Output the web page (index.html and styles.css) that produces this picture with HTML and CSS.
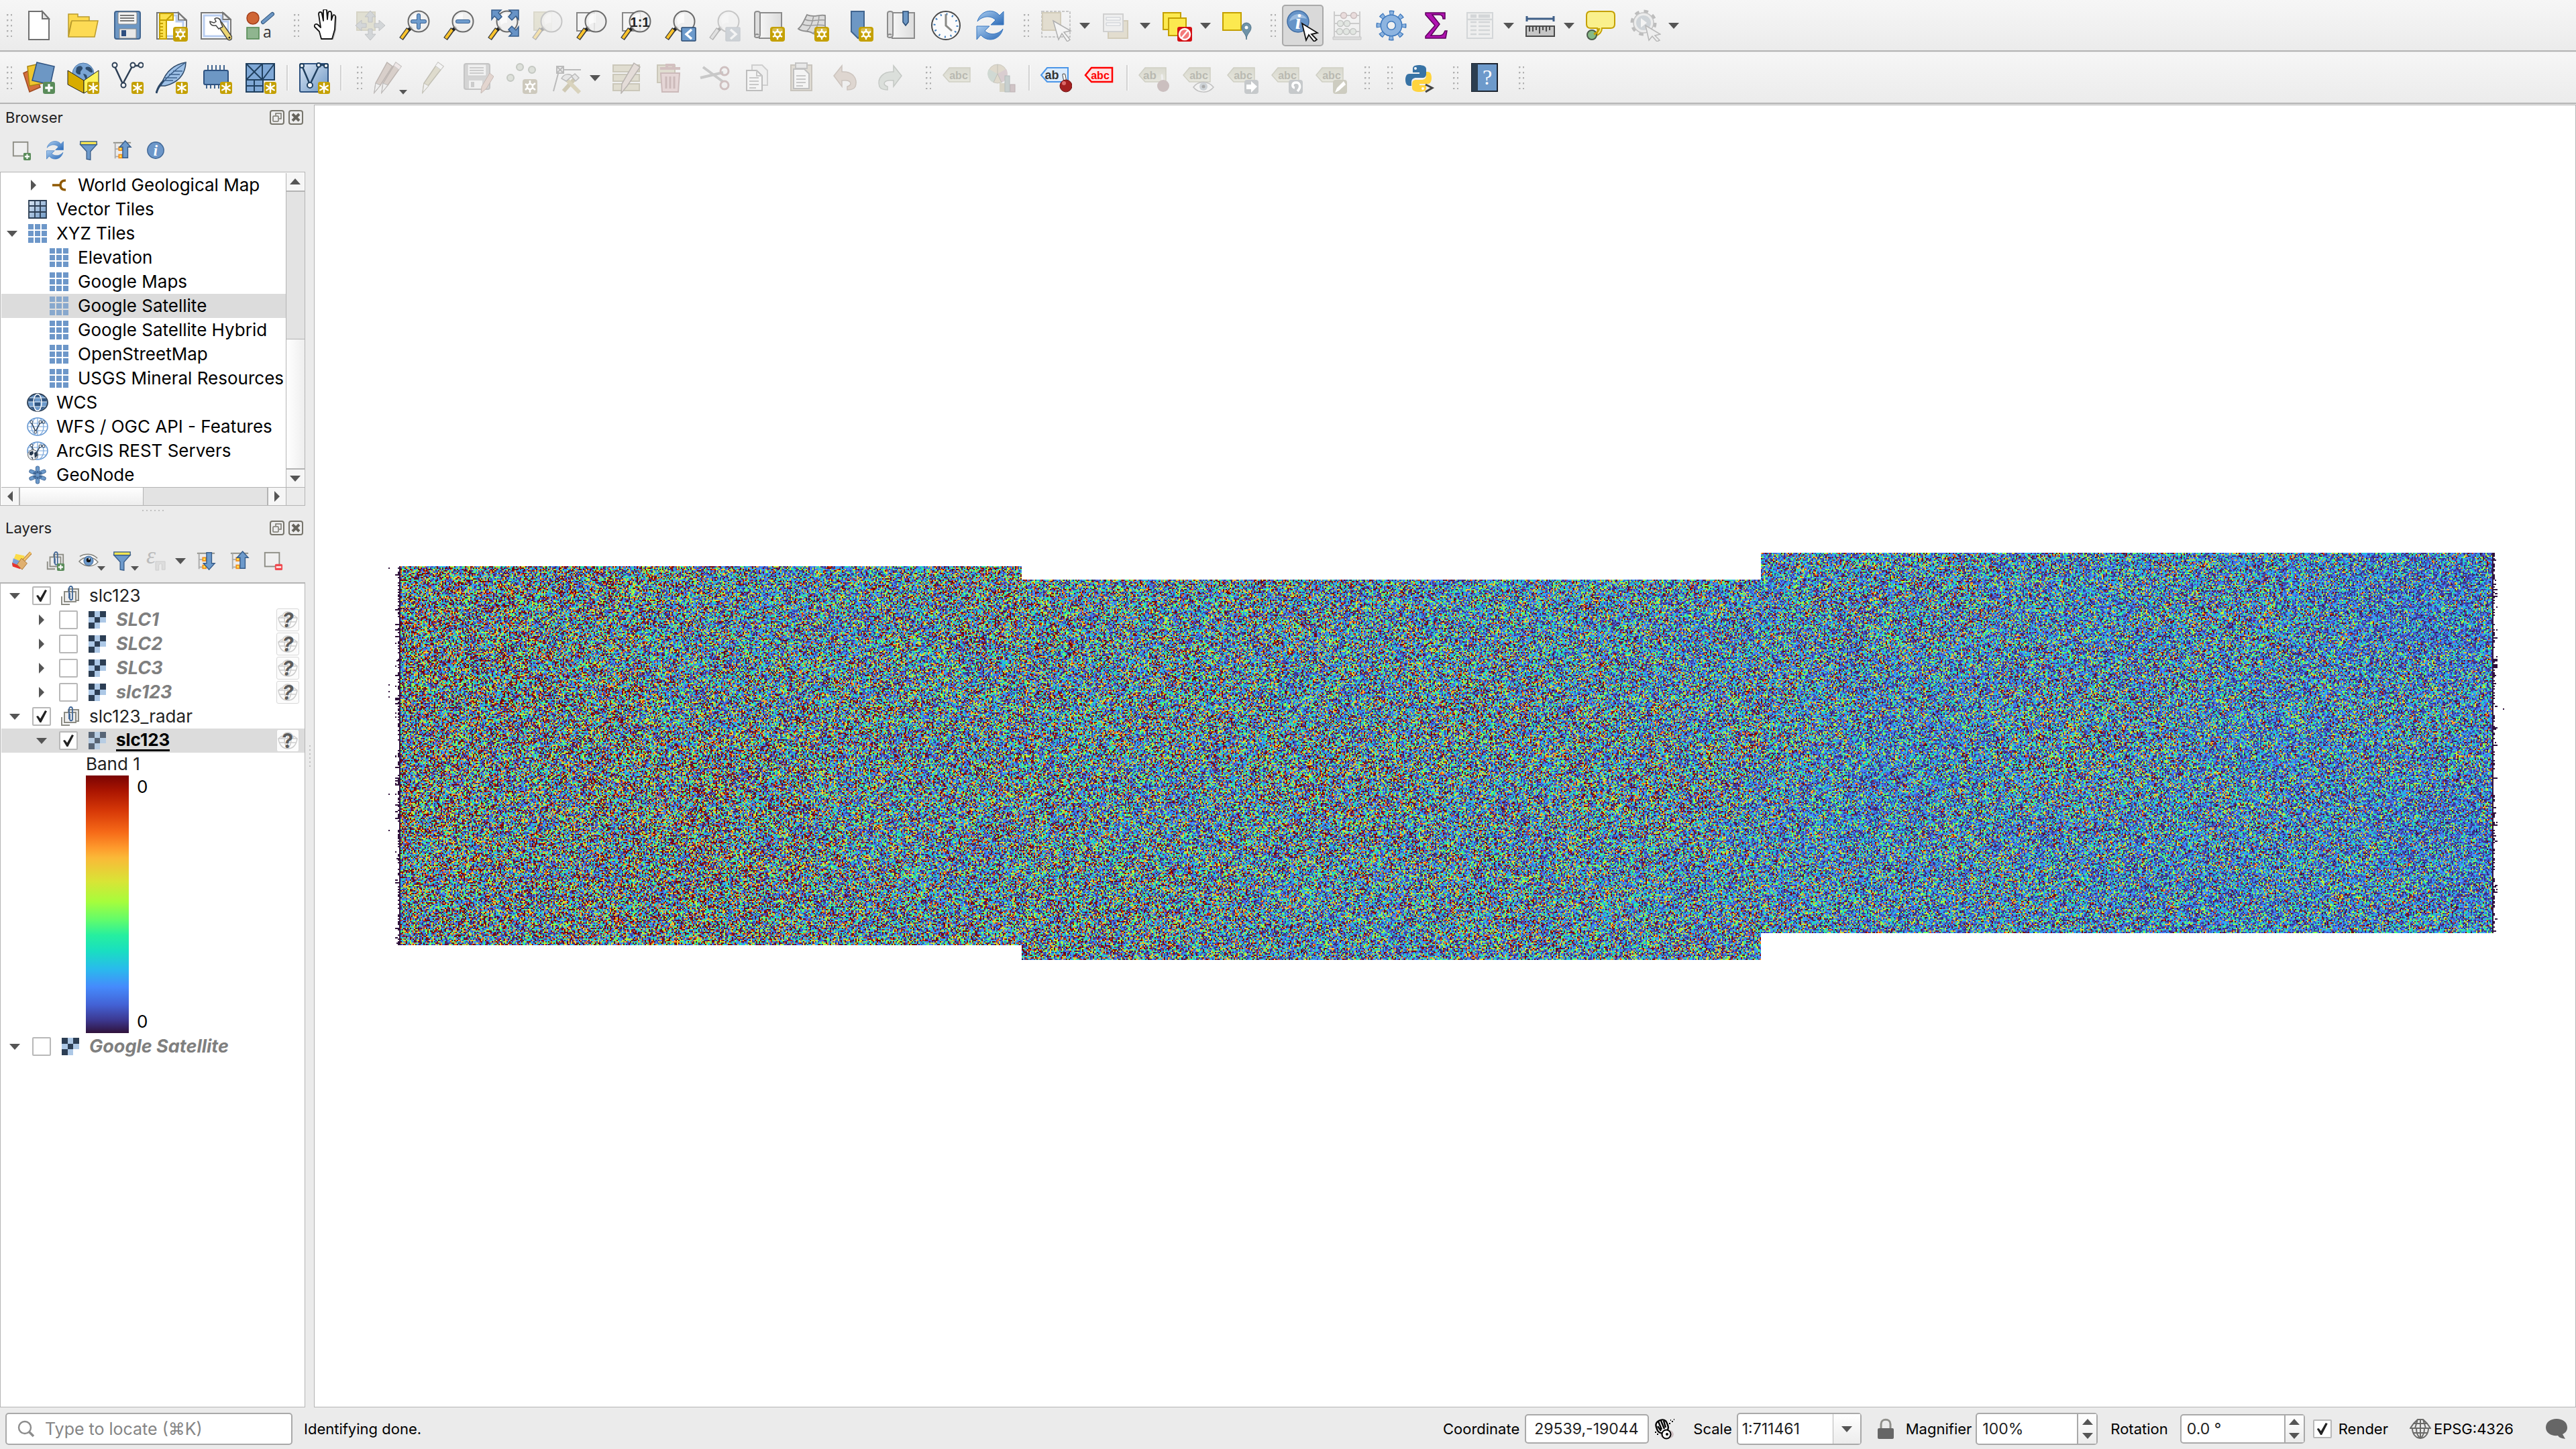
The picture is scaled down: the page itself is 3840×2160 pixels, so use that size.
FILE: index.html
```html
<!DOCTYPE html>
<html lang="en">
<head>
<meta charset="utf-8">
<title>QGIS</title>
<link rel="stylesheet" href="styles.css">
</head>
<body>
<svg class="defs" aria-hidden="true">
<defs>
<linearGradient id="g-blue" x1="0" y1="0" x2="1" y2="1"><stop offset="0" stop-color="#dbe7f5"/><stop offset="1" stop-color="#6d97c4"/></linearGradient>
<linearGradient id="g-arr" x1="0" y1="0" x2="1" y2="1"><stop offset="0" stop-color="#a9cbee"/><stop offset="1" stop-color="#2c6bb8"/></linearGradient>
<linearGradient id="g-page" x1="0" y1="0" x2="1" y2="0"><stop offset="0" stop-color="#f6f6f6"/><stop offset="1" stop-color="#dcdcdc"/></linearGradient>
<linearGradient id="g-tag" x1="0" y1="0" x2="0" y2="1"><stop offset="0" stop-color="#d9d9cf"/><stop offset="1" stop-color="#e6e6dd"/></linearGradient>
</defs>
<symbol id="badge" viewBox="0 0 22 22"><rect width="22" height="22" rx="4" fill="#c4a000"/><rect x="3" y="2" width="16" height="8" rx="3" fill="#d8bd4a"/><circle cx="11" cy="11" r="4" fill="none" stroke="#fff" stroke-width="2.4"/><path d="M11 3v4M11 15v4M4 7l3.500 2M14.500 13l3.500 2M4 15l3.500-2M14.500 9L18 7" stroke="#fff" stroke-width="2.400"/></symbol>
<symbol id="badge2" viewBox="0 0 22 22"><rect width="22" height="22" rx="4" fill="#c4a000"/><path d="M11 3v16M4 7l14 8M4 15l14-8" stroke="#fff" stroke-width="3" stroke-linecap="round"/></symbol>
<symbol id="plus" viewBox="0 0 22 22"><rect width="22" height="22" rx="4" fill="#5a8c5a"/><path d="M11 4v14M4 11h14" stroke="#fff" stroke-width="4"/></symbol>
<symbol id="lens" viewBox="0 0 48 48"><path d="M4 44L15 29" stroke="#3b3b3b" stroke-width="7"/><path d="M4.500 43L14 30" stroke="#fcc42c" stroke-width="4"/><path d="M15 31l5-5" stroke="#222" stroke-width="5"/><circle cx="30" cy="18" r="15.500" fill="#eee" fill-opacity=".85" stroke="#6b6b6b" stroke-width="2"/><path d="M19 16a11 11 0 0 1 11-10v14c-6 0-8 2-9 4z" fill="#fff" opacity=".7"/></symbol>
<symbol id="new" viewBox="0 0 48 48"><path d="M9 3h20l10 11v31H9z" fill="#fff" stroke="#707070" stroke-width="2"/><path d="M29 3v11h10z" fill="#e4e4e4" stroke="#707070" stroke-width="2"/></symbol>
<symbol id="open" viewBox="0 0 48 48"><path d="M2 7h14v4h17v8H6L2 40z" fill="#fcd94f" stroke="#b99a2c" stroke-width="1.500"/><path d="M7 17h39l-5 24H2z" fill="#fddb55" stroke="#b99a2c" stroke-width="1.500"/></symbol>
<symbol id="save" viewBox="0 0 48 48"><rect x="5" y="3" width="38" height="41" rx="3" fill="#6d97c4" stroke="#41658f" stroke-width="2"/><rect x="10" y="4" width="28" height="18" rx="2" fill="#f3f3f3" stroke="#888"/><path d="M13 9h21M13 13h21M13 17h21" stroke="#777" stroke-width="2"/><rect x="12" y="29" width="25" height="14" fill="#e8e8e8" stroke="#888"/><rect x="15" y="31" width="7" height="9" fill="#2e4f80"/></symbol>
<symbol id="layout" viewBox="0 0 48 48"><path d="M2 5h32l12 11v28H2z" fill="#fff" stroke="#777" stroke-width="2"/><path d="M34 5v11h11z" fill="#eee" stroke="#777" stroke-width="2"/><path d="M6 9h25v9h10v22H6z" fill="none" stroke="#b9cdf0" stroke-width="3"/><path d="M6 6h20v10H16v28H6z" fill="#fce14e" stroke="#c4a000" stroke-width="2"/><path d="M6 16h10L26 6M6 21h5M6 26h5M6 31h5M6 36h5M6 40h5" fill="none" stroke="#c4a000" stroke-width="2"/><use href="#badge" x="26" y="26" width="22" height="22"/></symbol>
<symbol id="layouts" viewBox="0 0 48 48"><path d="M2 5h33l11 10v29H2z" fill="#fff" stroke="#777" stroke-width="2"/><path d="M34 5v10h11z" fill="#eee" stroke="#777" stroke-width="2"/><path d="M6 9h26v9h10v22H6z" fill="none" stroke="#b9cdf0" stroke-width="3"/><path d="M30 22l14 20" stroke="#444" stroke-width="9" stroke-linecap="round"/><path d="M30 22l14 20" stroke="#ecd573" stroke-width="6" stroke-linecap="round"/><path d="M22 14c4-3 9 0 9 5l3 7-6 3-4-5c-5 1-9-1-9-6l6 2 3-2z" fill="#fafafa" stroke="#444" stroke-width="1.500"/><circle cx="44" cy="42" r="1.500" fill="#222"/></symbol>
<symbol id="style" viewBox="0 0 48 48"><ellipse cx="13" cy="13" rx="9" ry="9" fill="#cf6535" stroke="#a4401c" stroke-width="1.500"/><path d="M42 7L28 19" stroke="#32577f" stroke-width="6" stroke-linecap="round"/><path d="M42 7L28 19" stroke="#6d97c4" stroke-width="4" stroke-linecap="round"/><rect x="4" y="27" width="18" height="17" fill="#8fb58f" stroke="#4f864f" stroke-width="1.500"/><text x="28" y="42" font-size="23" font-family="Open Sans, sans-serif" fill="#333">a</text></symbol>
<symbol id="hand" viewBox="0 0 48 48"><path d="M18 44l-4-12-7-7c-1-3 2-4 4-3l4 4-2-20c0-4 5-4 5 0l2 11V3c0-4 5-4 5 0l1 13 1-10c1-3 4-3 4 1v10l2-7c1-3 4-2 4 1l-1 19-4 14z" transform="translate(3 1)" fill="#666" opacity=".45"/><path d="M17 44l-3-11-7-7c-1-4 2-5 5-3l4 4-3-20c0-4 5-4 5 0l2 10V2c0-3 5-3 5 0l1 13 1-10c1-3 5-3 5 1v10l2-6c1-3 4-2 4 1l-1 19-4 14z" fill="#fff" stroke="#111" stroke-width="1.800" stroke-linejoin="round"/></symbol>
<symbol id="pan" viewBox="0 0 48 48"><rect x="4" y="4" width="27" height="27" fill="#e0dfd2" stroke="#d6d4c6" stroke-width="2"/><path d="M24 2l8 9h-5v8h-6v-8h-5zM24 46l8-9h-5v-8h-6v8h-5zM2 24l9-8v5h7v6h-7v5zM46 24l-9-8v5h-7v6h7v5z" fill="#d3d6d8" stroke="#c0c2c4"/></symbol>
<symbol id="zin" viewBox="0 0 48 48"><use href="#lens"/><path d="M30 9v18M21 18h18" stroke="#3a6395" stroke-width="6" stroke-linecap="round"/><path d="M30 9v18M21 18h18" stroke="#6f9ccd" stroke-width="4" stroke-linecap="round"/></symbol>
<symbol id="zout" viewBox="0 0 48 48"><use href="#lens"/><path d="M22 18h16" stroke="#3a6395" stroke-width="6" stroke-linecap="round"/><path d="M22 18h16" stroke="#6f9ccd" stroke-width="4" stroke-linecap="round"/></symbol>
<symbol id="zfull" viewBox="0 0 48 48"><use href="#lens"/><g fill="#6793c6" stroke="#365c8a" stroke-width="1.500"><path d="M7 1h14l-4 4 5 6-5 5-6-6-4 5z"/><path d="M47 1H33l4 4-5 6 5 5 6-6 4 5z"/><path d="M47 40H33l4-4-5-6 5-5 6 6 4-5z"/></g></symbol>
<symbol id="zsel" viewBox="0 0 48 48"><rect x="4" y="4" width="26" height="27" fill="#c9c49a" stroke="#aaa57e" stroke-width="2"/><use href="#lens"/></symbol>
<symbol id="zlayer" viewBox="0 0 48 48"><rect x="2" y="5" width="26" height="27" fill="#f4f4f4" stroke="#888" stroke-width="2"/><use href="#lens"/></symbol>
<symbol id="znative" viewBox="0 0 48 48"><rect x="4" y="5" width="26" height="27" fill="#f4f4f4" stroke="#888" stroke-width="2"/><use href="#lens"/><text x="30" y="26" text-anchor="middle" font-size="20" font-weight="700" font-family="Liberation Sans, sans-serif" fill="#222">1:1</text></symbol>
<symbol id="zlast" viewBox="0 0 48 48"><use href="#lens"/><rect x="26" y="27" width="21" height="20" rx="1" fill="#6d9acb" stroke="#284a72" stroke-width="1.500"/><path d="M41 30l-8 7 8 7" fill="none" stroke="#fff" stroke-width="3.500"/></symbol>
<symbol id="znext" viewBox="0 0 48 48"><g filter="grayscale(1)"><use href="#lens"/></g><rect x="26" y="27" width="21" height="20" rx="1" fill="#8a98a6" stroke="#7c8896" stroke-width="1.500"/><path d="M33 30l8 7-8 7" fill="none" stroke="#fff" stroke-width="3.500"/></symbol>
<symbol id="scroll" viewBox="0 0 48 48"><path d="M10 5h33v38H10z" fill="url(#g-page)" stroke="#8c8c8c" stroke-width="2"/><path d="M3 38V6c0-4 8-4 8 0v32c0 5-8 5-8 2s4-4 6-2" fill="#dedede" stroke="#8c8c8c" stroke-width="2"/></symbol>
<symbol id="newmap" viewBox="0 0 48 48"><use href="#scroll"/><use href="#badge" x="26" y="26" width="22" height="22"/></symbol>
<symbol id="map3d" viewBox="0 0 48 48"><path d="M15 8c10 5 18-1 27 1 1 9-2 14 2 23-10 2-12 8-20 4-8-6-14-1-22-7 7-6 9-14 13-21z" fill="#dcdcdc" stroke="#8c8c8c" stroke-width="1.800"/><path d="M12 15c10 5 18-1 30 1M8 22c10 5 20-1 34 2M25 9c-2 10-4 18-11 24M33 9c0 8-3 20-9 27" fill="none" stroke="#999" stroke-width="1.500"/><use href="#badge" x="26" y="26" width="22" height="22"/></symbol>
<symbol id="newbm" viewBox="0 0 48 48"><path d="M15 3h19v30l-9 10-10-10z" fill="#6d97c4" stroke="#41658f" stroke-width="2"/><use href="#badge" x="26" y="26" width="22" height="22"/></symbol>
<symbol id="bms" viewBox="0 0 48 48"><use href="#scroll"/><path d="M26 3h8v16l-4 5-4-5z" fill="#6d97c4" stroke="#284a72" stroke-width="1.500"/></symbol>
<symbol id="clock" viewBox="0 0 48 48"><circle cx="24" cy="24" r="21" fill="#fbfbfb" stroke="#4a4a4a" stroke-width="2"/><circle cx="24" cy="24" r="17" fill="none" stroke="#3f7fc0" stroke-width="3" stroke-dasharray="2 6.900"/><path d="M24 7v17l9 8" fill="none" stroke="#8a8a86" stroke-width="3"/></symbol>
<symbol id="refresh" viewBox="0 0 48 48"><path d="M5 18C9 2 28-3 38 9l6-6v20H25l7-7C25 8 12 10 5 18z" fill="url(#g-arr)" stroke="#3a78c0"/><path d="M43 29C39 46 20 50 10 38l-6 7V25h19l-7 7c7 7 20 6 27-3z" fill="url(#g-arr)" stroke="#3a78c0"/></symbol>
<symbol id="select" viewBox="0 0 48 48"><rect x="3" y="3" width="42" height="38" fill="none" stroke="#c8c8c8" stroke-width="2" stroke-dasharray="4 2"/><rect x="4" y="5" width="27" height="26" fill="#e2ddcf" stroke="#d2ccba" stroke-width="2"/><path d="M20 17l26 15-10 2 9 11-4 3-8-12-5 9z" fill="#f4f4f4" stroke="#b0b0b0" stroke-width="1.500"/></symbol>
<symbol id="selform" viewBox="0 0 48 48"><rect x="12" y="17" width="29" height="26" fill="#e2ddcf" stroke="#d2ccba" stroke-width="2"/><rect x="5" y="7" width="29" height="26" fill="#eee" stroke="#d0d0d0" stroke-width="2"/><path d="M9 12h21v4H9zM9 20h21v4H9z" fill="#f6f6f6" stroke="#c8ccd2"/></symbol>
<symbol id="desel" viewBox="0 0 48 48"><rect x="4" y="5" width="26" height="25" fill="#fce94f" stroke="#c4a000" stroke-width="2"/><rect x="12" y="13" width="26" height="26" fill="#fce94f" stroke="#c4a000" stroke-width="2"/><rect x="25" y="26" width="22" height="22" rx="3" fill="#d40f14"/><circle cx="36" cy="37" r="8" fill="#f37a7a" stroke="#fff" stroke-width="2.500"/><path d="M41 31L31 43" stroke="#fff" stroke-width="2.500"/></symbol>
<symbol id="selloc" viewBox="0 0 48 48"><rect x="3" y="5" width="27" height="26" fill="#fce94f" stroke="#c4a000" stroke-width="2"/><path d="M38 45c0-9-7-11-7-18a7 7 0 0 1 14 0c0 7-7 9-7 18z" fill="#6f93a8" stroke="#50738a"/><circle cx="38" cy="27" r="2.500" fill="#fff"/></symbol>
<symbol id="identify" viewBox="0 0 48 48"><circle cx="17" cy="18" r="16" fill="#6694c8" stroke="#3f6ca3" stroke-width="1.500"/><path d="M4 18A14 14 0 0 1 30 14C22 12 12 13 4 18z" fill="#9dbde0"/><text x="17" y="29" text-anchor="middle" font-size="31" font-weight="700" font-style="italic" font-family="Liberation Serif, serif" fill="#fff">i</text><path d="M23 21l23 14-9 2 8 8-4 3-8-10-4 8z" fill="#fff" stroke="#111" stroke-width="1.800"/></symbol>
<symbol id="abacus" viewBox="0 0 48 48"><path d="M5 3v38M43 3v38M5 9h38M5 21h38M5 33h38" stroke="#ccc" stroke-width="2" fill="none"/><path d="M3 41h42v4H3z" fill="#ddd" stroke="#c6c6c6"/><g fill="#e9dcdc" stroke="#c9bcbc" stroke-width="1.500"><circle cx="19" cy="9" r="4.500"/><circle cx="34" cy="9" r="4.500"/></g><g fill="#e2e6e2" stroke="#c4c6c4" stroke-width="1.500"><circle cx="14" cy="21" r="4.500"/><circle cx="24" cy="21" r="4.500"/><circle cx="13" cy="33" r="4.500"/><circle cx="23" cy="33" r="4.500"/><circle cx="33" cy="33" r="4.500"/></g></symbol>
<symbol id="gear" viewBox="0 0 48 48"><circle cx="24" cy="24" r="18" fill="none" stroke="#3f79bd" stroke-width="9" stroke-dasharray="6.500 7.630" stroke-dashoffset="3.250"/><circle cx="24" cy="24" r="18" fill="none" stroke="#8db4e0" stroke-width="6" stroke-dasharray="4.500 9.630" stroke-dashoffset="2.250"/><circle cx="24" cy="24" r="11" fill="none" stroke="#3f79bd" stroke-width="11"/><circle cx="24" cy="24" r="11" fill="none" stroke="#8db4e0" stroke-width="8"/></symbol>
<symbol id="sigma" viewBox="0 0 48 48"><path d="M9 5h29v9h-3c0-4-2-6-6-6H19l11 14-13 17h13c5 0 6-3 8-7h3l-2 11H9v-3l14-16L9 8z" fill="#b012b0" stroke="#5c005c" stroke-width="1.500"/></symbol>
<symbol id="table" viewBox="0 0 48 48"><rect x="5" y="5" width="38" height="38" fill="#efefef" stroke="#d3d6d8" stroke-width="2"/><path d="M10 10h9M22 10h17" stroke="#d3d6d8" stroke-width="5"/><path d="M6 15h36M10 19h9M22 19h17M10 25h9M22 25h17M10 31h9M22 31h17M10 37h9M22 37h17" stroke="#d3d6d8" stroke-width="2.500"/></symbol>
<symbol id="ruler" viewBox="0 0 48 48"><path d="M4 14h40M4 10v8M44 10v8" stroke="#3f5f88" stroke-width="3" fill="none"/><rect x="3" y="25" width="42" height="15" fill="#c6c6c6" stroke="#4a4a4a" stroke-width="2"/><path d="M8 26v7M13 26v7M18 26v5M23 26v10M28 26v5M33 26v7M38 26v5" stroke="#4a4a4a" stroke-width="2"/></symbol>
<symbol id="maptip" viewBox="0 0 48 48"><path d="M9 3h30c4 0 6 2 6 6v13c0 4-2 6-6 6H26c0 6-4 10-11 12 5-4 5-7 4-12H9c-4 0-6-2-6-6V9c0-4 2-6 6-6z" fill="#faf08c" stroke="#c4a000" stroke-width="2"/><circle cx="11" cy="38" r="7" fill="#86b986" stroke="#4a5a4a" stroke-width="2"/><path d="M14 37c5-2 7-5 8-9" stroke="#c4a000" stroke-width="3" fill="none"/></symbol>
<symbol id="action" viewBox="0 0 48 48"><circle cx="22" cy="20" r="16" fill="none" stroke="#bdbdbd" stroke-width="7" stroke-dasharray="6 6.560"/><circle cx="22" cy="20" r="15" fill="#ececec" stroke="#c4c4c4" stroke-width="1.500"/><circle cx="22" cy="20" r="11" fill="#cfd4d8"/><path d="M18 13l9 7-9 7z" fill="#f3f3f3"/><path d="M25 24l22 13-8 2 7 7-4 2-7-8-5 6z" fill="#eee" stroke="#b8b8b8" stroke-width="1.500"/></symbol>

<symbol id="dsm" viewBox="0 0 48 48"><path d="M1 17l15-7 10 28-16 7z" fill="#d4703e" stroke="#9f4a20" stroke-width="1.500"/><path d="M7 7l18-4 6 29-21 4z" fill="#f0c62e" stroke="#a88512" stroke-width="1.500"/><path d="M21 1l26 6-6 27-27-6z" fill="#6d97c4" stroke="#2e5280" stroke-width="1.500"/><use href="#plus" x="30" y="30" width="18" height="18"/></symbol>
<symbol id="gpkg" viewBox="0 0 48 48"><circle cx="24" cy="18" r="16" fill="#7aa5d4" stroke="#4a76a8"/><path d="M14 9c4-4 8-3 9 0s-4 4-3 8-6 2-7-2zM28 8c6-2 9 2 10 6s-4 2-6 0-6-2-4-6zM24 18c5 0 8 4 4 9z" fill="#2e4c6e"/><path d="M1 13l24 15v19L1 34z" fill="#d8ac00" stroke="#222"/><path d="M47 13L25 28v19l22-13z" fill="#fcf35a" stroke="#222"/><use href="#badge2" x="30" y="30" width="18" height="18"/></symbol>
<symbol id="shp" viewBox="0 0 48 48"><path d="M5 7l12 26L31 7M33 6h8" fill="none" stroke="#2c3e54" stroke-width="2.500"/><g fill="#fff" stroke="#2c3e54" stroke-width="2"><circle cx="5" cy="5" r="3.500"/><circle cx="18" cy="35" r="3.500"/><circle cx="32" cy="5" r="3.500"/><circle cx="44" cy="5" r="3.500"/></g><use href="#badge2" x="30" y="30" width="18" height="18"/></symbol>
<symbol id="feather" viewBox="0 0 48 48"><path d="M45 1C28 4 14 14 8 36l6 0C30 32 44 22 45 1z" fill="#9dc0e6" stroke="#2c4766" stroke-width="1.500"/><path d="M1 46C8 32 20 18 45 1M12 28h14M14 24h18M20 19h16M26 14h14" fill="none" stroke="#3b5f8a" stroke-width="1.500"/><path d="M1 47C3 38 8 32 12 28" fill="none" stroke="#2c4766" stroke-width="3"/><use href="#badge2" x="30" y="30" width="18" height="18"/></symbol>
<symbol id="chip" viewBox="0 0 48 48"><path d="M12 5v8M18 5v8M24 5v8M30 5v8M36 5v8M10 34v6M16 34v6M22 34v6M28 34v6" stroke="#41658f" stroke-width="2"/><rect x="6" y="13" width="36" height="21" rx="2" fill="#6d97c4" stroke="#2e5280" stroke-width="2"/><use href="#badge2" x="30" y="30" width="18" height="18"/></symbol>
<symbol id="mesh" viewBox="0 0 48 48"><path d="M3 3h42v24H28v18H3z" fill="#7fa8d6"/><path d="M3 3h42v24H3zM27 3v24M3 3l24 24M27 3L3 27M45 3L27 27M3 27v18h25V27M15 27v18M3 36h25" fill="none" stroke="#20405f" stroke-width="2"/><use href="#badge2" x="30" y="30" width="18" height="18"/></symbol>
<symbol id="virt" viewBox="0 0 48 48"><rect x="3" y="3" width="42" height="42" rx="2" fill="url(#g-blue)" stroke="#2e5280" stroke-width="2"/><path d="M7 8l11 26L31 7M33 5h10" fill="none" stroke="#20405f" stroke-width="2.500"/><g fill="#fff" stroke="#20405f" stroke-width="2"><circle cx="6" cy="6" r="3"/><circle cx="18" cy="35" r="4"/><circle cx="31" cy="5" r="3"/><circle cx="42" cy="6" r="3"/></g><use href="#badge2" x="30" y="30" width="18" height="18"/></symbol>
<symbol id="pencil1" viewBox="0 0 48 48"><path d="M31 1l8 6-22 28-9 11 2-14z" fill="#dedbcd" stroke="#c2c0b5" stroke-width="1.500"/><path d="M10 32l7 4-9 10z" fill="#f0f0f0" stroke="#c2c0b5"/><path d="M31 1l8 6-4 5-8-6z" fill="#f4f4f4" stroke="#ccc"/></symbol>
<symbol id="pencils" viewBox="0 0 48 48"><g fill="#d8cfca" stroke="#bdb5b1" stroke-width="1.500"><path d="M21 1l8 6-18 28-9 11 2-14z"/><path d="M34 1l8 6-20 28-9 11 2-14z"/></g><path d="M4 32l7 3-9 11zM15 32l7 3-9 11z" fill="#eee" stroke="#bbb"/><path d="M34 1l8 6-3 5-8-6z" fill="#f0e8e8" stroke="#ccc"/></symbol>
<symbol id="saveedit" viewBox="0 0 48 48"><rect x="4" y="3" width="38" height="38" rx="3" fill="#d4d4d4" stroke="#c4c4c4" stroke-width="2"/><rect x="9" y="4" width="28" height="17" fill="#f0f0f0" stroke="#ccc"/><path d="M12 9h21M12 13h21M12 17h21" stroke="#ccc" stroke-width="2"/><rect x="11" y="28" width="20" height="12" fill="#f0f0f0"/><rect x="14" y="30" width="5" height="8" fill="#ccc"/><path d="M42 17l6 5-11 18-8 7 1-10z" fill="#e3d5cf" stroke="#c6b9b4"/></symbol>
<symbol id="addpt" viewBox="0 0 48 48"><g fill="#dde0da" stroke="#c4c8c2" stroke-width="2"><circle cx="21" cy="8" r="5"/><circle cx="39" cy="12" r="5"/><circle cx="7" cy="24" r="5"/></g><rect x="25" y="26" width="22" height="22" rx="4" fill="#cdc9bd"/><circle cx="36" cy="37" r="4" fill="none" stroke="#fff" stroke-width="2.500"/><path d="M36 28v5M36 41v5M29 33l3 2M40 39l4 3M29 42l3-3M40 35l4-3" stroke="#fff" stroke-width="2.500"/></symbol>
<symbol id="vertex" viewBox="0 0 48 48"><rect x="10" y="7" width="10" height="10" fill="#eee" stroke="#bbb" stroke-width="2"/><path d="M11 8l8 8M19 8l-8 8M20 12h26M12 18L5 44" stroke="#bbb" stroke-width="2"/><path d="M20 44l18-20" stroke="#cfc9b4" stroke-width="6"/><path d="M24 26l20 20" stroke="#d9d3bd" stroke-width="6"/><path d="M17 25c4-8 12-7 16-4l-9 8zM32 22l5-4 6 6-5 5z" fill="#e6e6e6" stroke="#bbb" stroke-width="1.500"/></symbol>
<symbol id="attr" viewBox="0 0 48 48"><g fill="#e0ddd0" stroke="#cbc8ba" stroke-width="2"><rect x="4" y="5" width="39" height="10"/><rect x="4" y="19" width="39" height="10"/><rect x="4" y="33" width="39" height="10"/></g><path d="M35 2l9 6-19 28-9 11 1-14z" fill="#e4dcd8" stroke="#b9b4b0" stroke-width="1.500"/></symbol>
<symbol id="trash" viewBox="0 0 48 48"><rect x="4" y="5" width="26" height="26" fill="#e0ddd0" stroke="#cbc8ba" stroke-width="2"/><path d="M8 10h30M18 9V5h10v4" stroke="#d3c0c0" stroke-width="4" fill="none"/><path d="M9 17h28l-2 28H11z" fill="#e5d6d6" stroke="#ccbaba" stroke-width="2"/><path d="M17 22v18M23 22v18M29 22v18" stroke="#ccbaba" stroke-width="3"/></symbol>
<symbol id="cut" viewBox="0 0 48 48"><path d="M6 8l30 22M2 24l34-8" stroke="#c8c8c8" stroke-width="4"/><circle cx="38" cy="14" r="6" fill="none" stroke="#cfc0c0" stroke-width="3"/><circle cx="38" cy="35" r="6" fill="none" stroke="#cfc0c0" stroke-width="3"/></symbol>
<symbol id="copy" viewBox="0 0 48 48"><path d="M13 5h15l8 8v22H13z" fill="#efefef" stroke="#cfcfcf" stroke-width="2"/><path d="M5 13h15l8 8v22H5z" fill="#f4f4f4" stroke="#bdbdbd" stroke-width="2"/><path d="M20 13v8h8M9 24h14M9 29h14M9 34h14M9 39h10" stroke="#c8c8c8" stroke-width="2" fill="none"/></symbol>
<symbol id="paste" viewBox="0 0 48 48"><rect x="5" y="5" width="31" height="38" fill="#e0dcd4" stroke="#c9c5be" stroke-width="2"/><rect x="12" y="2" width="17" height="8" fill="#e8e8e8" stroke="#c4c4c4" stroke-width="2"/><path d="M9 11h16l7 7v22H9z" fill="#f4f4f4" stroke="#c0c0c0" stroke-width="2"/><path d="M13 21h14M13 26h14M13 31h14M13 36h10" stroke="#c8c8c8" stroke-width="2"/></symbol>
<symbol id="undo" viewBox="0 0 48 48"><path d="M3 21L15 6v9c16-1 24 10 20 22-2 4-6 5-12 5v-5c8-2 7-11-8-9v9z" fill="#ded6d0" stroke="#ccc4be" stroke-width="1.500"/></symbol>
<symbol id="redo" viewBox="0 0 48 48"><path d="M38 21L26 6v9C10 14 1 25 5 37c2 4 6 5 12 5v-5c-8-2-7-11 9-9v9z" fill="#dbdfdb" stroke="#c5c9c5" stroke-width="1.500"/></symbol>
<symbol id="tag" viewBox="0 0 48 48"><path d="M2 20L11 9h31v21H11z" fill="url(#g-tag)" stroke="#cfcfc4" stroke-width="1.500"/><text x="25" y="26" text-anchor="middle" font-size="16" font-weight="700" font-family="Liberation Sans, sans-serif" fill="#b9b9b1">abc</text></symbol>
<symbol id="diagram" viewBox="0 0 48 48"><circle cx="17" cy="18" r="14" fill="#dfd9cc" stroke="#cbc9c0"/><path d="M17 18L4 11a14 14 0 0 0 7 20z" fill="#d0d9d3"/><path d="M17 18L30 11a14 14 0 0 1-7 20z" fill="#d9cdd0"/><path d="M17 4v14l-6 13M17 18l6 13" stroke="#c0c0b8" fill="none"/><rect x="20" y="32" width="9" height="13" fill="#d8d4c6"/><rect x="28" y="21" width="7" height="24" fill="#c8d0cf" stroke="#b4bcbb"/><rect x="36" y="34" width="7" height="11" fill="#d0c4c6" stroke="#bcb0b2"/></symbol>
<symbol id="pinlab" viewBox="0 0 48 48"><path d="M2 20L11 9h31v21H11z" fill="#dcebfb" stroke="#4b96e8" stroke-width="2"/><text x="18" y="26" text-anchor="middle" font-size="18" font-weight="700" font-family="Liberation Sans, sans-serif" fill="#333">ab</text><path d="M36 20l2 10" stroke="#444" stroke-width="5" stroke-linecap="round"/><path d="M36 20l2 10" stroke="#fff" stroke-width="3" stroke-linecap="round"/><circle cx="39" cy="36" r="9" fill="#a32020" stroke="#6f1010"/><circle cx="36" cy="32" r="3" fill="#dd6a6a"/></symbol>
<symbol id="redlab" viewBox="0 0 48 48"><path d="M2 20L11 9h31v21H11z" fill="#fde3e3" stroke="#f00" stroke-width="2.500"/><text x="24" y="26" text-anchor="middle" font-size="16" font-weight="700" font-family="Liberation Sans, sans-serif" fill="#f00">abc</text></symbol>
<symbol id="tagpin" viewBox="0 0 48 48"><path d="M2 20L11 9h31v21H11z" fill="url(#g-tag)" stroke="#cfcfc4" stroke-width="1.500"/><text x="18" y="26" text-anchor="middle" font-size="17" font-weight="700" font-family="Liberation Sans, sans-serif" fill="#b9b9b1">ab</text><path d="M36 20l1 9" stroke="#eee" stroke-width="3" stroke-linecap="round"/><circle cx="38" cy="36" r="9" fill="#cbbfbf"/></symbol>
<symbol id="tageye" viewBox="0 0 48 48"><use href="#tag"/><path d="M17 38c7-10 22-10 30 0-8 10-23 9-30 0z" fill="#f2f2f2" stroke="#c0c0c0" stroke-width="1.500"/><circle cx="32" cy="37" r="6" fill="#cdd2d6"/><circle cx="32" cy="37" r="2.500" fill="#aaa"/></symbol>
<symbol id="tagmove" viewBox="0 0 48 48"><use href="#tag"/><rect x="27" y="27" width="21" height="21" rx="4" fill="#c6c9cb"/><path d="M30 34h7v-5l9 8-9 9v-5h-7z" fill="#fff"/></symbol>
<symbol id="tagrot" viewBox="0 0 48 48"><use href="#tag"/><rect x="27" y="27" width="21" height="21" rx="4" fill="#c6c9cb"/><path d="M40 44c6-6 4-13-2-13s-7 7-2 8" fill="none" stroke="#fff" stroke-width="3.500"/></symbol>
<symbol id="tagedit" viewBox="0 0 48 48"><use href="#tag"/><rect x="27" y="27" width="21" height="21" rx="4" fill="#cdccc0"/><path d="M43 29l3 5-10 9-6 3 3-7z" fill="#fff"/></symbol>
<symbol id="python" viewBox="0 0 48 48"><path d="M23 5c-9 0-9 4-9 6v5h10v2H9c-5 0-6 5-6 9 0 5 2 9 6 9h3v-5c0-5 3-7 7-7h9c4 0 6-2 6-6v-7c0-4-4-6-11-6z" fill="#3873a5"/><path d="M25 45c9 0 9-4 9-6v-4H24v-2h12c5 0 6-5 6-9s-1-9-6-9h-2v5c0 5-3 7-7 7h-8c-4 0-6 2-6 6v6c0 4 4 6 12 6z" fill="#ffd43e"/><circle cx="18" cy="10" r="2" fill="#fff"/><circle cx="29" cy="40" r="2" fill="#fff"/><path d="M33 34l10 5-10 6" fill="none" stroke="#444" stroke-width="3"/></symbol>
<symbol id="help" viewBox="0 0 48 48"><rect x="4" y="3" width="38" height="41" fill="#6d9acb" stroke="#1c2430" stroke-width="2"/><path d="M4 3h9v41H4z" fill="#2c3e50"/><text x="27" y="34" text-anchor="middle" font-size="32" font-family="Liberation Serif, serif" fill="#fff">?</text></symbol>

<symbol id="s-add" viewBox="0 0 32 32"><rect x="3" y="3" width="23" height="22" fill="#efefef" stroke="#8c8c84" stroke-width="2"/><use href="#plus" x="19" y="20" width="12" height="12"/></symbol>
<symbol id="s-filter" viewBox="0 0 32 32"><path d="M3 7l10 11v12l6 1V18L29 7z" fill="#6d9acb" stroke="#3a5f8c" stroke-width="1.500"/><rect x="3" y="2" width="26" height="5" fill="#fce94f" stroke="#3a5f8c" stroke-width="1.500"/></symbol>
<symbol id="s-tree" viewBox="0 0 32 32"><path d="M2 4h28" stroke="#8c8c84" stroke-width="2"/><path d="M5 4v25M5 14h6M5 26h6" stroke="#aaa" stroke-width="2" fill="none"/><rect x="11" y="11" width="5" height="5" fill="#fce94f" stroke="#f39020" stroke-width="2"/><rect x="11" y="23" width="5" height="5" fill="#fce94f" stroke="#f39020" stroke-width="2"/></symbol>
<symbol id="s-up" viewBox="0 0 32 32"><use href="#s-tree"/><path d="M21 1l9 10h-5v17h-8V11h-5z" fill="#6d9acb" stroke="#365c8a" stroke-width="1.500"/></symbol>
<symbol id="s-down" viewBox="0 0 32 32"><use href="#s-tree"/><path d="M21 30l9-10h-5V3h-8v17h-5z" fill="#6d9acb" stroke="#365c8a" stroke-width="1.500"/></symbol>
<symbol id="s-info" viewBox="0 0 32 32"><circle cx="16" cy="16" r="13" fill="#6d97c9" stroke="#3d6595" stroke-width="1.500"/><text x="16" y="24" text-anchor="middle" font-size="24" font-weight="700" font-style="italic" font-family="Liberation Serif, serif" fill="#fff">i</text></symbol>
<symbol id="s-brush" viewBox="0 0 32 32"><path d="M7 5l14 3-6 18-14-6z" fill="#fbdc4a"/><path d="M3 12l15 6-3 9-14-4z" fill="#7ba0da"/><path d="M1 19l15 6-2 4-12-4z" fill="#e8322c"/><path d="M31 3L18 17" stroke="#b9803a" stroke-width="5"/><path d="M31 3L18 17" stroke="#f2c36b" stroke-width="3"/><path d="M16 12l9 8-8 10-8-8z" fill="#e0b070" stroke="#a87434"/></symbol>
<symbol id="group" viewBox="0 0 32 32"><path d="M4 17v12h12" fill="none" stroke="#8c8c84" stroke-width="2"/><rect x="14" y="6" width="15" height="17" fill="#eee" stroke="#8c8c84" stroke-width="2"/><rect x="8" y="10" width="17" height="15" fill="#eee" stroke="#8c8c84" stroke-width="2"/><path d="M15 20V5c0-4 5-4 5 0v15c0 3-4 3-4 0v-8" fill="none" stroke="#3f6595" stroke-width="1.800"/></symbol>
<symbol id="s-group" viewBox="0 0 32 32"><use href="#group"/><use href="#plus" x="19" y="20" width="12" height="12"/></symbol>
<symbol id="s-eye" viewBox="0 0 32 32"><path d="M2 9c8-5 20-5 28 3M1 17c8-9 22-9 30 1-8 9-21 8-30-1z" fill="#fbfbfb" stroke="#80807a" stroke-width="1.500"/><circle cx="16" cy="16" r="7.500" fill="#6d9acb" stroke="#3a5f8c"/><circle cx="16" cy="15" r="3.500" fill="#111"/><circle cx="17" cy="13" r="1.200" fill="#fff"/></symbol>
<symbol id="s-expr" viewBox="0 0 32 32"><text x="1" y="20" font-size="38" font-family="Liberation Serif, serif" font-style="italic" fill="#bcbcbc">ε</text><path d="M16 17h15v13h-5v-8l-2-2-3 3v8h-5z" fill="#ddd" stroke="#ccc"/></symbol>
<symbol id="s-rem" viewBox="0 0 32 32"><rect x="3" y="3" width="23" height="22" fill="#efefef" stroke="#8c8c84" stroke-width="2"/><rect x="19" y="21" width="12" height="10" rx="2" fill="#ef4b51"/><path d="M21 26h8" stroke="#fff" stroke-width="2.500"/></symbol>
<symbol id="raster" viewBox="0 0 26 26"><path d="M0 0h9v9H0zM17 0h9v9h-9zM9 9h8v8H9zM0 17h9v9H0z" fill="#2c3e54"/><path d="M9 0h8v9H9zM0 9h9v8H0zM17 9h9v8h-9zM9 17h8v9H9z" fill="#adc8e6"/></symbol>
<symbol id="xyz" viewBox="0 0 28 28"><path d="M0 0h8v8H0zM10 0h8v8h-8zM20 0h8v8h-8zM0 10h8v8H0zM10 10h8v8h-8zM20 10h8v8h-8zM0 20h8v8H0zM10 20h8v8h-8zM20 20h8v8h-8z" fill="#6d97c9"/></symbol>
<symbol id="vt" viewBox="0 0 28 28"><rect x="1" y="1" width="26" height="26" fill="url(#g-blue)"/><path d="M1 1h26v26H1zM10 1v26M18 1v26M1 9h26M1 18h26" fill="none" stroke="#2c3e54" stroke-width="1.800"/></symbol>
<symbol id="conn" viewBox="0 0 28 28"><path d="M4 14h11" stroke="#8f5902" stroke-width="3.500"/><path d="M24 7c-5 0-8 2-8 7s3 7 8 7" fill="none" stroke="#8f5902" stroke-width="3.500"/></symbol>
<symbol id="wcs" viewBox="0 0 32 28"><ellipse cx="16" cy="14" rx="15" ry="13" fill="#6d9acb" stroke="#2c3e54" stroke-width="1.800"/><path d="M4 7h8v6H2zM20 7h8l2 6H20zM12 14h8v6h-8zM12 2h8v5h-8zM4 20h8v6zM20 20h8l-7 5z" fill="#2f5480"/><path d="M2 13h28M4 7h24M4 20h24" stroke="#dce8f4" stroke-width="1.200"/><ellipse cx="16" cy="14" rx="6" ry="12.500" fill="none" stroke="#fff" stroke-width="1.400"/></symbol>
<symbol id="wfs0" viewBox="0 0 32 28"><ellipse cx="16" cy="14" rx="15" ry="13" fill="#fdfeff" stroke="#5f93cf" stroke-width="1.500"/><path d="M16 1v26M2 9h28M1 14h30M3 20h26" stroke="#7aa7dc" stroke-width="1.200"/><ellipse cx="16" cy="14" rx="9" ry="13" fill="none" stroke="#7aa7dc" stroke-width="1.200"/></symbol>
<symbol id="wfs" viewBox="0 0 32 28"><use href="#wfs0"/><path d="M7 8l6 13 7-13h6" fill="none" stroke="#2c3e54" stroke-width="1.500"/><g fill="#fff" stroke="#2c3e54"><circle cx="7" cy="7" r="2"/><circle cx="13" cy="22" r="2"/><circle cx="20" cy="7" r="2"/><circle cx="25" cy="7" r="2"/></g></symbol>
<symbol id="arc" viewBox="0 0 32 28"><use href="#wfs0"/><path d="M7 7l3 6M15 16l5-9h6" fill="none" stroke="#2c3e54" stroke-width="1.500"/><circle cx="9" cy="20" r="7.500" fill="#e8ecf0" stroke="#666"/><path d="M4 16l5-2 1 4-3 3-3-1zM11 17l4-2 1 6-4 4zM6 23l3 1v3z" fill="#26384e"/><g fill="#fff" stroke="#2c3e54"><circle cx="7" cy="6" r="2"/><circle cx="20" cy="7" r="2"/><circle cx="25" cy="7" r="2"/></g></symbol>
<symbol id="geonode" viewBox="0 0 32 32"><g stroke="#3d6595" stroke-width="7" stroke-linecap="round"><path d="M16 4v6M16 22v6M5 10l5 2M22 20l5 2M5 22l5-2M22 12l5-2"/></g><g stroke="#6d9acb" stroke-width="5" stroke-linecap="round"><path d="M16 4v6M16 22v6M5 10l5 2M22 20l5 2M5 22l5-2M22 12l5-2"/></g><path d="M16 9v14M9 12l14 8M9 20l14-8" stroke="#3d6595" stroke-width="3"/><circle cx="16" cy="16" r="3" fill="#6d9acb"/></symbol>
<symbol id="crs" viewBox="0 0 32 32"><path d="M2 13h28c-1 9-6 15-14 15S3 22 2 13zM7 13c1-6 5-9 9-9s8 3 9 9M4 19h24M16 4v24M11 13c0 7 2 12 5 15M21 13c0 7-2 12-5 15M2 13l5-4M30 13l-5-4" fill="none" stroke="#ccc" stroke-width="1.500"/><text x="16" y="27" text-anchor="middle" font-size="30" font-weight="700" font-family="Inter, sans-serif" fill="#5c5c5c">?</text></symbol>
<symbol id="float" viewBox="0 0 22 22"><rect x="1" y="1" width="20" height="20" rx="3" fill="#eee" stroke="#77756c" stroke-width="2"/><rect x="5" y="9" width="8" height="8" rx="1" fill="none" stroke="#77756c" stroke-width="1.500"/><path d="M9 8V5h8v8h-3" fill="none" stroke="#77756c" stroke-width="1.500"/></symbol>
<symbol id="close" viewBox="0 0 22 22"><rect x="1" y="1" width="20" height="20" rx="3" fill="#eee" stroke="#77756c" stroke-width="2"/><path d="M6 6l10 10M16 6L6 16" stroke="#66645c" stroke-width="4"/></symbol>
<symbol id="t-down" viewBox="0 0 16 10"><path d="M0 1h16L8 10z" fill="#555"/></symbol>
<symbol id="t-up" viewBox="0 0 16 10"><path d="M0 9h16L8 0z" fill="#555"/></symbol>
<symbol id="t-right" viewBox="0 0 10 16"><path d="M1 0v16l8-8z" fill="#555"/></symbol>
<symbol id="t-left" viewBox="0 0 10 16"><path d="M9 0v16L1 8z" fill="#555"/></symbol>
<symbol id="search" viewBox="0 0 26 26"><circle cx="11" cy="11" r="9" fill="none" stroke="#8c8c8c" stroke-width="2.400"/><path d="M17 17l7 7" stroke="#8c8c8c" stroke-width="3.500"/></symbol>
<symbol id="mouse" viewBox="0 0 32 32"><ellipse cx="19" cy="24" rx="10" ry="7" fill="#cdbfc2"/><rect x="3" y="3" width="17" height="19" rx="7" transform="rotate(-20 11 12)" fill="#fff" stroke="#000" stroke-width="2.400"/><path d="M6 5l5 12M10 4l5 12M5 12l5 7M14 4l3 10" stroke="#000" stroke-width="2.400"/><circle cx="18" cy="24" r="6.500" fill="#fff" stroke="#000" stroke-width="2"/><circle cx="19" cy="24" r="2" fill="#000"/><path d="M22 8h2M26 5h2M24 3h1M29 2h1M1 21h2M4 24h2" stroke="#000" stroke-width="2"/></symbol>
<symbol id="lock" viewBox="0 0 26 32"><path d="M6 16V9c0-9 14-9 14 0v7" fill="none" stroke="#8f8f8a" stroke-width="3"/><rect x="1" y="15" width="24" height="16" rx="2" fill="#666"/></symbol>
<symbol id="globe" viewBox="0 0 32 32"><path d="M1 15h30l-5-7-6-6h-8L6 8zM5 8h22M12 2L8 15M20 2l4 13M16 2v28M4 15c0 8 5 15 12 15s12-7 12-15M6 22h20M10 15c0 7 2 12 6 15M22 15c0 7-2 12-6 15" fill="none" stroke="#6a6a68" stroke-width="2"/></symbol>
<symbol id="bubble" viewBox="0 0 34 32"><path d="M17 1c9 0 16 5 16 13 0 5-3 8-7 10l4 7c-6-1-9-2-11-5C9 27 1 22 1 14S8 1 17 1z" fill="#666"/></symbol>
</svg>

<header class="toolbars">
<div class="bar">
<div class="group" role="toolbar"><span class="grip"></span>
<button class="tb"><svg><use href="#new"/></svg></button><button class="tb"><svg><use href="#open"/></svg></button><button class="tb"><svg><use href="#save"/></svg></button><button class="tb"><svg><use href="#layout"/></svg></button><button class="tb"><svg><use href="#layouts"/></svg></button><button class="tb"><svg><use href="#style"/></svg></button></div>
<div class="group" role="toolbar"><span class="grip"></span>
<button class="tb"><svg><use href="#hand"/></svg></button><button class="tb"><svg><use href="#pan"/></svg></button><button class="tb"><svg><use href="#zin"/></svg></button><button class="tb"><svg><use href="#zout"/></svg></button><button class="tb"><svg><use href="#zfull"/></svg></button><button class="tb faded"><svg><use href="#zsel"/></svg></button><button class="tb"><svg><use href="#zlayer"/></svg></button><button class="tb"><svg><use href="#znative"/></svg></button><button class="tb"><svg><use href="#zlast"/></svg></button><button class="tb faded"><svg><use href="#znext"/></svg></button><button class="tb"><svg><use href="#newmap"/></svg></button><button class="tb"><svg><use href="#map3d"/></svg></button><button class="tb"><svg><use href="#newbm"/></svg></button><button class="tb"><svg><use href="#bms"/></svg></button><button class="tb"><svg><use href="#clock"/></svg></button><button class="tb"><svg><use href="#refresh"/></svg></button></div>
<div class="group" role="toolbar"><span class="grip"></span>
<button class="tb menu"><svg><use href="#select"/></svg><svg class="drop"><use href="#t-down"/></svg></button><button class="tb menu"><svg><use href="#selform"/></svg><svg class="drop"><use href="#t-down"/></svg></button><button class="tb menu"><svg><use href="#desel"/></svg><svg class="drop"><use href="#t-down"/></svg></button><button class="tb"><svg><use href="#selloc"/></svg></button></div>
<div class="group last" role="toolbar"><span class="grip"></span>
<button class="tb pressed"><svg><use href="#identify"/></svg></button><button class="tb"><svg><use href="#abacus"/></svg></button><button class="tb"><svg><use href="#gear"/></svg></button><button class="tb"><svg><use href="#sigma"/></svg></button><button class="tb menu"><svg><use href="#table"/></svg><svg class="drop"><use href="#t-down"/></svg></button><button class="tb menu"><svg><use href="#ruler"/></svg><svg class="drop"><use href="#t-down"/></svg></button><button class="tb"><svg><use href="#maptip"/></svg></button><button class="tb menu"><svg><use href="#action"/></svg><svg class="drop"><use href="#t-down"/></svg></button></div>
</div>
<div class="bar">
<div class="group" role="toolbar"><span class="grip"></span>
<button class="tb"><svg><use href="#dsm"/></svg></button><button class="tb"><svg><use href="#gpkg"/></svg></button><button class="tb"><svg><use href="#shp"/></svg></button><button class="tb"><svg><use href="#feather"/></svg></button><button class="tb"><svg><use href="#chip"/></svg></button><button class="tb"><svg><use href="#mesh"/></svg></button><span class="sep"></span><button class="tb"><svg><use href="#virt"/></svg></button><span class="sep"></span></div>
<div class="group" role="toolbar"><span class="grip"></span>
<button class="tb"><svg><use href="#pencils"/></svg><svg class="corner"><use href="#t-down"/></svg></button><button class="tb"><svg><use href="#pencil1"/></svg></button><button class="tb"><svg><use href="#saveedit"/></svg></button><button class="tb"><svg><use href="#addpt"/></svg></button><button class="tb menu"><svg><use href="#vertex"/></svg><svg class="drop"><use href="#t-down"/></svg></button><button class="tb"><svg><use href="#attr"/></svg></button><button class="tb"><svg><use href="#trash"/></svg></button><button class="tb"><svg><use href="#cut"/></svg></button><button class="tb"><svg><use href="#copy"/></svg></button><button class="tb"><svg><use href="#paste"/></svg></button><button class="tb"><svg><use href="#undo"/></svg></button><button class="tb"><svg><use href="#redo"/></svg></button></div>
<div class="group" role="toolbar"><span class="grip"></span>
<button class="tb"><svg><use href="#tag"/></svg></button><button class="tb"><svg><use href="#diagram"/></svg></button><span class="sep"></span><button class="tb"><svg><use href="#pinlab"/></svg></button><button class="tb"><svg><use href="#redlab"/></svg></button><span class="sep"></span><button class="tb"><svg><use href="#tagpin"/></svg></button><button class="tb"><svg><use href="#tageye"/></svg></button><button class="tb"><svg><use href="#tagmove"/></svg></button><button class="tb"><svg><use href="#tagrot"/></svg></button><button class="tb"><svg><use href="#tagedit"/></svg></button></div>
<div class="group" role="toolbar"><span class="grip"></span></div>
<div class="group" role="toolbar"><span class="grip"></span><button class="tb"><svg><use href="#python"/></svg></button></div>
<div class="group" role="toolbar"><span class="grip"></span><button class="tb"><svg><use href="#help"/></svg></button></div>
<div class="group last" role="toolbar"><span class="grip"></span></div>
</div>
</header>

<main class="work">
<aside class="side">
<section class="dock">
<div class="title"><h2>Browser</h2><button><svg><use href="#float"/></svg></button><button><svg><use href="#close"/></svg></button></div>
<div class="tools"><button><svg><use href="#s-add"/></svg></button><button><svg><use href="#refresh"/></svg></button><button><svg><use href="#s-filter"/></svg></button><button><svg><use href="#s-up"/></svg></button><button><svg><use href="#s-info"/></svg></button></div>
<div class="browser">
<ul class="tree">
<li class="sub"><svg class="ex"><use href="#t-right"/></svg><svg class="ic"><use href="#conn"/></svg>World Geological Map</li>
<li><span class="ex"></span><svg class="ic"><use href="#vt"/></svg>Vector Tiles</li>
<li><svg class="ex"><use href="#t-down"/></svg><svg class="ic"><use href="#xyz"/></svg>XYZ Tiles</li>
<li class="sub"><span class="ex"></span><svg class="ic"><use href="#xyz"/></svg>Elevation</li>
<li class="sub"><span class="ex"></span><svg class="ic"><use href="#xyz"/></svg>Google Maps</li>
<li class="sub current"><span class="ex"></span><svg class="ic"><use href="#xyz"/></svg>Google Satellite</li>
<li class="sub"><span class="ex"></span><svg class="ic"><use href="#xyz"/></svg>Google Satellite Hybrid</li>
<li class="sub"><span class="ex"></span><svg class="ic"><use href="#xyz"/></svg>OpenStreetMap</li>
<li class="sub"><span class="ex"></span><svg class="ic"><use href="#xyz"/></svg>USGS Mineral Resources Online</li>
<li><span class="ex"></span><svg class="ic wide"><use href="#wcs"/></svg>WCS</li>
<li><span class="ex"></span><svg class="ic wide"><use href="#wfs"/></svg>WFS / OGC API - Features</li>
<li><span class="ex"></span><svg class="ic wide"><use href="#arc"/></svg>ArcGIS REST Servers</li>
<li><span class="ex"></span><svg class="ic wide"><use href="#geonode"/></svg>GeoNode</li>
</ul>
<div class="vscroll"><button><svg><use href="#t-up"/></svg></button><span class="trough"></span><span class="thumb"></span><button><svg><use href="#t-down"/></svg></button></div>
<div class="hscroll"><button><svg><use href="#t-left"/></svg></button><span class="thumb"></span><span class="trough"></span><button><svg><use href="#t-right"/></svg></button></div>
<span class="nook"></span>
</div>
</section>
<div class="hsplit"><span></span></div>
<section class="dock grow">
<div class="title"><h2>Layers</h2><button><svg><use href="#float"/></svg></button><button><svg><use href="#close"/></svg></button></div>
<div class="tools"><button><svg><use href="#s-brush"/></svg></button><button><svg><use href="#s-group"/></svg></button><button><svg><use href="#s-eye"/></svg><svg class="corner"><use href="#t-down"/></svg></button><button><svg><use href="#s-filter"/></svg><svg class="corner"><use href="#t-down"/></svg></button><button class="menu"><svg><use href="#s-expr"/></svg><svg class="drop"><use href="#t-down"/></svg></button><button><svg><use href="#s-down"/></svg></button><button><svg><use href="#s-up"/></svg></button><button><svg><use href="#s-rem"/></svg></button></div>
<ul class="layers">
<li><svg class="ex"><use href="#t-down"/></svg><label><input type="checkbox" checked><svg class="gic"><use href="#group"/></svg>slc123</label></li>
<li class="sub off"><svg class="ex"><use href="#t-right"/></svg><label><input type="checkbox"><svg class="ric"><use href="#raster"/></svg>SLC1</label><button><svg><use href="#crs"/></svg></button></li>
<li class="sub off"><svg class="ex"><use href="#t-right"/></svg><label><input type="checkbox"><svg class="ric"><use href="#raster"/></svg>SLC2</label><button><svg><use href="#crs"/></svg></button></li>
<li class="sub off"><svg class="ex"><use href="#t-right"/></svg><label><input type="checkbox"><svg class="ric"><use href="#raster"/></svg>SLC3</label><button><svg><use href="#crs"/></svg></button></li>
<li class="sub off"><svg class="ex"><use href="#t-right"/></svg><label><input type="checkbox"><svg class="ric"><use href="#raster"/></svg>slc123</label><button><svg><use href="#crs"/></svg></button></li>
<li><svg class="ex"><use href="#t-down"/></svg><label><input type="checkbox" checked><svg class="gic"><use href="#group"/></svg>slc123_radar</label></li>
<li class="sub current"><svg class="ex"><use href="#t-down"/></svg><label><input type="checkbox" checked><svg class="ric"><use href="#raster"/></svg><b>slc123</b></label><button><svg><use href="#crs"/></svg></button></li>
<li class="legend"><span>Band 1</span><div class="scale"><i class="ramp"></i><div class="ends"><span>0</span><span>0</span></div></div></li>
<li class="off"><svg class="ex"><use href="#t-down"/></svg><label><input type="checkbox"><svg class="ric"><use href="#raster"/></svg>Google Satellite</label></li>
</ul>
</section>
</aside>
<div class="vsplit"><span></span></div>
<section class="map"><canvas id="map"></canvas></section>
</main>

<footer class="status">
<div class="search"><svg><use href="#search"/></svg><input type="text" aria-label="Locate" placeholder="Type to locate (⌘K)"></div>
<output class="msg">Identifying done.</output>
<label for="coord">Coordinate</label><div class="field"><input id="coord" type="text" value="29539,-19044"></div>
<button class="extents"><svg><use href="#mouse"/></svg></button>
<label for="scale">Scale</label><div class="combo"><select id="scale"><option>1:711461</option></select><span><svg><use href="#t-down"/></svg></span></div>
<button class="lock"><svg><use href="#lock"/></svg></button>
<label for="mag">Magnifier</label><div class="spin tall"><input id="mag" type="text" value="100%"><span><button><svg><use href="#t-up"/></svg></button><button><svg><use href="#t-down"/></svg></button></span></div>
<label class="rot" for="rot">Rotation</label><div class="spin"><input id="rot" type="text" value="0.0 °"><span><button><svg><use href="#t-up"/></svg></button><button><svg><use href="#t-down"/></svg></button></span></div>
<label class="render"><input type="checkbox" checked>Render</label>
<button class="epsg"><svg><use href="#globe"/></svg>EPSG:4326</button>
<button class="msgs"><svg><use href="#bubble"/></svg></button>
</footer>
<script src="map.js"></script>
</body>
</html>
```
FILE: styles.css
```css
* { box-sizing: border-box; }
body {
  margin: 0;
  height: 100vh;
  display: flex;
  flex-direction: column;
  overflow: hidden;
  background: #ebebeb;
  color: #000;
  font: 26px/36px Inter, "Liberation Sans", sans-serif;
}
.defs { position: absolute; width: 0; height: 0; }
button { margin: 0; padding: 0; border: 0; background: none; font: inherit; color: inherit; flex: none; }
svg { display: block; flex: none; }
ul { margin: 0; padding: 0; list-style: none; }

/* toolbars */
.toolbars { flex: none; }
.bar {
  display: flex;
  height: 78px;
  background: linear-gradient(#f6f6f6, #ebebeb);
}
.group {
  display: flex;
  flex: none;
  align-items: center;
  min-width: 34px;
  padding-right: 7px;
  border-bottom: 2px solid #b4b4b4;
  margin-bottom: 1px;
}
.group.last { flex: 1; }
.grip {
  flex: none;
  width: 8px;
  height: 34px;
  margin: 0 7px 0 10px;
  background: radial-gradient(circle at 1px 1px, #b0b0b0 1px, transparent 2px) 0 0 / 6px 8px;
}
.tb { position: relative; display: flex; align-items: center; width: 66px; height: 62px; padding-left: 9px; }
.tb svg { width: 48px; height: 48px; }
.tb.menu { width: 90px; }
.tb .drop { width: 16px; height: 10px; margin-left: 11px; }
.tb .corner { position: absolute; right: 6px; bottom: 6px; width: 12px; height: 8px; }
.tb.faded svg { opacity: .32; }
.tb.pressed { width: 62px; margin: 0 2px; padding-left: 5px; background: #d9d9d9; border: 2px solid #a9a9a9; border-radius: 5px; }
.sep { width: 3px; height: 38px; margin: 0 5px 0 6px; border-left: 2px solid #d2d2d2; border-right: 1px solid #fff; }

/* workspace */
.work { flex: 1; min-height: 0; display: flex; }
.side { flex: none; width: 455px; display: flex; flex-direction: column; }
.dock { display: flex; flex-direction: column; }
.dock.grow { flex: 1; min-height: 0; }
.title { display: flex; align-items: center; gap: 6px; height: 38px; padding: 0 3px 0 8px; color: #222; }
.title h2 { flex: 1; margin: 0; font-size: 22px; font-weight: 400; }
.title svg { width: 22px; height: 22px; }
.tools { display: flex; align-items: center; height: 62px; padding: 0 0 2px 7px; }
.tools button { position: relative; display: flex; align-items: center; width: 50px; padding-left: 10px; }
.tools .menu { width: 75px; }
.tools svg { width: 30px; height: 30px; }
.tools .drop { width: 16px; height: 10px; margin-left: 14px; }
.tools .corner { position: absolute; right: 0; bottom: 0; width: 12px; height: 8px; }

.browser {
  display: grid;
  grid-template-columns: 1fr 28px;
  grid-template-rows: auto 27px;
  background: #fff;
  border: 1px solid #b4b4b4;
  padding: 1px 0 0 1px;
}
.tree { min-width: 0; overflow: hidden; }
.tree li { display: flex; align-items: center; height: 36px; padding-left: 8px; white-space: nowrap; }
.tree .sub { padding-left: 40px; }
.tree .current, .layers .current { background: #dcdcdc; }
.ex { flex: none; width: 16px; height: 16px; }
.ic { width: 28px; height: 28px; margin: 0 14px 0 16px; }
.ic.wide { width: 32px; margin: 0 12px 0 14px; }
.current .ic, .current .ric { opacity: .75; }
.vscroll { display: flex; flex-direction: column; border-left: 1px solid #b4b4b4; }
.vscroll button, .hscroll button { display: grid; place-items: center; width: 26px; height: 26px; background: #f6f6f6; }
.vscroll svg { width: 16px; height: 10px; }
.vscroll .trough { flex: 221; background: #e3e3e3; border: solid #b4b4b4; border-width: 2px 0 1px; }
.vscroll .thumb { flex: 193; background: linear-gradient(90deg, #fff, #eee); border-bottom: 2px solid #b4b4b4; }
.hscroll { display: flex; border-top: 1px solid #b4b4b4; }
.hscroll svg { width: 10px; height: 16px; }
.hscroll .thumb { flex: 184; background: linear-gradient(#fff, #eee); border: solid #b4b4b4; border-width: 0 1px 0 2px; }
.hscroll .trough { flex: 186; background: #e3e3e3; border-right: 2px solid #b4b4b4; }
.nook { background: #ebebeb; border: solid #b4b4b4; border-width: 1px 0 0 1px; }
.hsplit { display: grid; place-items: center; height: 14px; }
.hsplit span { width: 32px; height: 2px; background: repeating-linear-gradient(90deg, #c0c0c0 0 2px, transparent 2px 6px); }
.vsplit { display: grid; place-items: center; width: 13px; }
.vsplit span { width: 2px; height: 32px; background: repeating-linear-gradient(#c0c0c0 0 2px, transparent 2px 6px); }

.layers { flex: 1; background: #fff; border: 1px solid #b4b4b4; border-top-width: 2px; padding-left: 1px; color: #222; }
.layers li { display: flex; align-items: center; height: 36px; padding-left: 12px; }
.layers .sub { padding-left: 52px; }
.layers label { flex: 1; display: flex; align-items: center; }
.layers input { margin: 0 12px 0 18px; }
.gic { width: 32px; height: 32px; margin-right: 13px; }
.ric { width: 26px; height: 26px; margin: 0 15px 0 4px; }
.layers .off { color: #7f7f7f; font-size: 27px; font-weight: 700; font-style: italic; }
.layers b { color: #000; border-bottom: 3px solid #000; line-height: 28px; }
.layers button { width: 34px; height: 34px; margin-right: 8px; border: 1px solid #d8d8d8; border-radius: 3px; background: #fcfcfc; }
.layers button svg { width: 32px; height: 32px; }
.layers .legend { display: block; height: auto; padding: 0 0 2px 126px; line-height: 34px; }
.scale { display: flex; height: 384px; gap: 12px; }
.ramp {
  width: 64px;
  background: linear-gradient(#7a0403, #aa1501 6%, #d83a08 14%, #f66a18 22%, #fe992c 28%, #fab938 32%, #d9e436 41%, #a6fd3c 49%, #62fc6b 56%, #26ef9f 62%, #19dfc0 68%, #29bbec 75%, #458bfc 82%, #4362d5 89%, #3c3890 95%, #30123b);
}
.ends { display: flex; flex-direction: column; justify-content: space-between; color: #000; }

input[type=checkbox] { appearance: none; flex: none; display: grid; place-items: center; width: 28px; height: 28px; background: #fff; border: 2px solid #b8b8b8; border-radius: 2px; }
input[type=checkbox]:checked::before {
  content: "";
  width: 16px;
  height: 18px;
  background: #222;
  clip-path: polygon(0 50%, 17% 44%, 38% 68%, 82% 0, 100% 7%, 46% 100%, 34% 100%);
}

.map { flex: 1; min-width: 0; padding: 1px 0 0; border: 1px solid #b4b4b4; background: #fff; overflow: hidden; }
.map canvas { display: block; width: 100%; height: 100%; image-rendering: pixelated; }

/* status bar */
.status { flex: none; display: flex; align-items: center; height: 62px; padding: 2px 12px 0 8px; font-size: 22px; line-height: 28px; }
.status input[type=text], .status select { font: inherit; color: #222; border: 0; outline: 0; background: none; min-width: 0; }
.search, .combo, .spin, .field { display: flex; align-items: center; font-size: 23px; background: #fff; border: 2px solid #a9a9a9; border-radius: 5px; }
.search { width: 428px; height: 48px; padding-left: 16px; font-size: 25px; }
.search svg { width: 26px; height: 26px; }
.search input { flex: 1; padding: 0 0 0 15px; }
.search input::placeholder { color: #858585; }
.msg { flex: 1; padding-left: 17px; }
.field { width: 185px; height: 44px; margin-left: 8px; }
.field input { flex: 1; padding: 0 0 0 12px; }
.extents { margin: 0 26px 0 8px; }
.extents svg { width: 32px; height: 32px; }
.combo { position: relative; width: 186px; height: 48px; margin-left: 7px; }
.combo select { appearance: none; width: 100%; height: 100%; padding: 0 0 0 6px; }
.combo span { position: absolute; top: 0; right: 0; display: grid; place-items: center; width: 41px; height: 44px; border-left: 1px solid #b8b8b8; background: linear-gradient(#fff, #ececec); pointer-events: none; }
.combo svg { width: 16px; height: 10px; }
.lock { margin: 0 17px 0 23px; }
.lock svg { width: 26px; height: 32px; }
.spin { width: 186px; height: 44px; margin-left: 18px; }
.spin.tall { width: 182px; height: 48px; margin-left: 6px; }
.spin input { flex: 1; padding: 0 0 0 8px; }
.spin span { display: flex; flex-direction: column; justify-content: center; gap: 10px; width: 29px; height: 100%; border-left: 2px solid #a9a9a9; background: linear-gradient(#fff, #ececec); }
.spin button { display: grid; place-items: center; }
.spin svg { width: 16px; height: 10px; }
.rot { margin-left: 19px; }
.render { display: flex; align-items: center; }
.render input { margin: 0 10px 0 12px; }
.epsg { display: flex; align-items: center; gap: 4px; margin: 0 47px 0 32px; }
.epsg svg { width: 32px; height: 32px; }
.msgs svg { width: 34px; height: 32px; }
```
FILE: map.js
```js
// Paints the three radar swaths as speckle, two screen pixels per cell.
(function () {
  const canvas = document.getElementById('map');
  const w = canvas.width = Math.floor(canvas.clientWidth / 2);
  const h = canvas.height = Math.floor(canvas.clientHeight / 2);
  const ctx = canvas.getContext('2d');
  const img = ctx.createImageData(w, h);

  const hex = ['30123b', '3b2f80', '4145ab', '4662d7', '467bf3', '4294ff', '2fabf3', '1fc2dc', '1bd8c0', '26ea9f', '4bf878', '78fe5a', 'a2fc3c', 'c3f134', 'e1dd37', 'f6c33a', 'fea632', 'fb8122', 'f05b12', 'dd3d08', 'c32503', 'a01101', '7a0403'];
  const ramp = hex.map(c => [0, 2, 4].map(i => parseInt(c.substr(i, 2), 16)));

  let seed = 20231;
  const rnd = () => {
    seed = (seed * 1664525 + 1013904223) >>> 0;
    return (seed >>> 8) / 16777216;
  };
  const put = (x, y, c) => {
    if (x < 0 || y < 0 || x >= w || y >= h) return;
    const i = (y * w + x) * 4;
    img.data[i] = c[0]; img.data[i + 1] = c[1]; img.data[i + 2] = c[2]; img.data[i + 3] = 255;
  };

  // swath extents as shares of a 1685 x 970 cell view
  const sx = w / 1685, sy = h / 970;
  const swaths = [[63, 527, 343, 626], [527, 1078, 353, 637], [1078, 1624, 333, 617]];
  const left = Math.round(63 * sx), right = Math.round(1624 * sx);
  const waves = [];
  for (let k = 0; k < 14; k++) waves.push([rnd() * .06 - .03, rnd() * .1 - .05, rnd() * 6.3]);

  for (const [x0, x1, y0, y1] of swaths) {
    const a = Math.round(x0 * sx), b = Math.round(x1 * sx);
    for (let y = Math.round(y0 * sy); y < Math.round(y1 * sy); y++) {
      for (let x = a; x < b; x++) {
        let t = 0;
        for (const [u, v, p] of waves) t += Math.sin(x * u + y * v + p);
        const mean = (.53 - .27 * (x - left) / (right - left)) * (1 + .03 * t);
        const v = Math.min(1, .02 - Math.log(1 - rnd()) * mean);
        put(x, y, ramp[Math.round(v * (ramp.length - 1))]);
      }
      if (a === left || b === right) {
        const e = a === left ? a : b - 1, d = a === left ? -1 : 1;
        put(e, y, ramp[0]);
        if (rnd() < .4) put(e + d, y, ramp[0]);
        if (rnd() < .12) for (let k = 1; k < 4; k++) if (rnd() < .7) put(e + d * k, y, ramp[0]);
        if (rnd() < .02) put(e + d * 8, y, ramp[0]);
      }
    }
  }
  ctx.putImageData(img, 0, 0);
})();
```
